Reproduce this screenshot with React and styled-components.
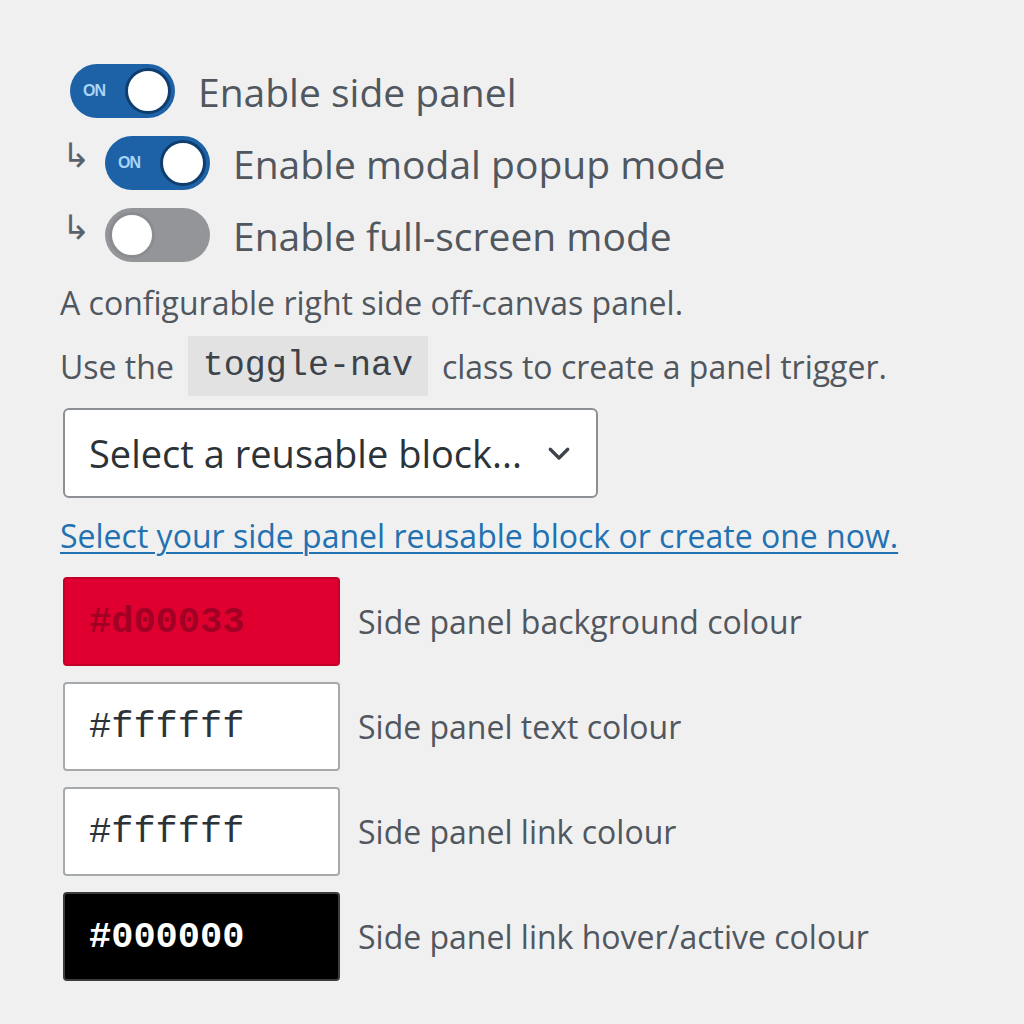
import React from 'react';
import styled, { createGlobalStyle } from 'styled-components';

const GlobalStyle = createGlobalStyle`
  html, body {
    margin: 0;
    padding: 0;
    background: #f0f0f1;
  }
  body {
    font-family: "Open Sans", "Noto Sans", sans-serif;
    color: #3c434a;
  }
`

const Panel = styled.div`
  width: 1024px;
  height: 1024px;
  box-sizing: border-box;
  padding: 55px 0 0 60px;
  display: flex;
  flex-direction: column;
`

const ToggleRow = styled.label`
  display: flex;
  align-items: center;
  height: 72px;
  margin-left: ${props => props.nested ? '2px' : '10px'};
`

const Arrow = styled.span`
  flex: none;
  width: 30px;
  overflow: visible;
  font-family: "DejaVu Sans", sans-serif;
  font-size: 34px;
  line-height: 1;
  color: #5c6168;
  margin-right: 13px;
  margin-top: -16px;
`

const Track = styled.span`
  position: relative;
  flex: none;
  width: 105px;
  height: 54px;
  box-sizing: border-box;
  border-radius: 27px;
  background: ${props => props.on ? '#1d62a6' : '#939598'};
  margin-right: 23px;
`

const OnText = styled.span`
  position: absolute;
  left: 13px;
  top: 17px;
  font-family: "Liberation Sans", sans-serif;
  font-size: 16px;
  font-weight: 700;
  line-height: 20px;
  color: #a9d4f5;
  letter-spacing: -1px;
`

const Knob = styled.span`
  position: absolute;
  top: 4px;
  ${props => props.on ? 'right: 4px;' : 'left: 4px;'}
  width: 46px;
  height: 46px;
  box-sizing: border-box;
  border-radius: 50%;
  background: #fff;
  border: 3px solid ${props => props.on ? '#0e3d6e' : '#8a8c90'};
`

const ToggleLabel = styled.span`
  font-size: 39px;
  line-height: 1;
  color: #50575e;
`

const Description = styled.p`
  margin: 0;
  height: ${props => props.first ? '62px' : '66px'};
  display: flex;
  align-items: center;
  font-size: 32px;
  color: #50575e;
  white-space: nowrap;
`

const Code = styled.code`
  font-family: "Liberation Mono", "DejaVu Sans Mono", monospace;
  font-size: 35px;
  background: #e2e2e3;
  padding: 10px 15px;
  margin: 0 14px;
  color: #3c434a;
`

const Select = styled.div`
  margin: 9px 0 0 3px;
  width: 535px;
  height: 90px;
  box-sizing: border-box;
  display: flex;
  align-items: center;
  justify-content: space-between;
  padding: 0 22px 0 24px;
  background: #fff;
  border: 2px solid #8c8f94;
  border-radius: 6px;
  font-size: 38px;
  color: #2c3338;
`

const HelpLink = styled.a`
  display: inline-block;
  margin-top: 16px;
  font-size: 32px;
  color: #2271b1;
  text-decoration: underline;
  text-decoration-thickness: 2px;
  text-underline-offset: 4px;
  white-space: nowrap;
`

const ColourList = styled.div`
  margin-top: 20px;
  display: flex;
  flex-direction: column;
  gap: 16px;
`

const ColourRow = styled.div`
  display: flex;
  align-items: center;
  gap: 18px;
`

const ColourInput = styled.div`
  margin-left: 3px;
  width: 277px;
  height: 89px;
  box-sizing: border-box;
  display: flex;
  align-items: center;
  padding-left: 24px;
  background: ${props => props.bg};
  color: ${props => props.fg};
  border: 2px solid ${props => props.border};
  border-radius: 4px;
  font-family: "Liberation Mono", "DejaVu Sans Mono", monospace;
  font-size: 37px;
  font-weight: ${props => props.bold ? 700 : 400};
`

const ColourLabel = styled.span`
  font-size: 32px;
  color: #50575e;
`

function Toggle({ on }) {
  return (
    <Track on={on}>
      {on && <OnText>ON</OnText>}
      <Knob on={on} />
    </Track>
  );
}

function Chevron() {
  return (
    <svg width="30" height="30" viewBox="0 0 24 24" fill="none" stroke="#3c434a" strokeWidth="2.6" strokeLinecap="round" strokeLinejoin="round">
      <path d="M5 9l7 7 7-7" />
    </svg>
  );
}

const colours = [
  { value: '#d00033', bg: '#e0002f', fg: '#a10024', border: '#c4002a', label: 'Side panel background colour', bold: true },
  { value: '#ffffff', bg: '#ffffff', fg: '#2c3338', border: '#a7aaad', label: 'Side panel text colour' },
  { value: '#ffffff', bg: '#ffffff', fg: '#2c3338', border: '#a7aaad', label: 'Side panel link colour' },
  { value: '#000000', bg: '#000000', fg: '#ffffff', border: '#3c3c3c', label: 'Side panel link hover/active colour', bold: true },
];

export default function App() {
  return (
    <>
      <GlobalStyle />
      <Panel>
        <ToggleRow>
          <Toggle on />
          <ToggleLabel>Enable side panel</ToggleLabel>
        </ToggleRow>
        <ToggleRow nested>
          <Arrow>↳</Arrow>
          <Toggle on />
          <ToggleLabel>Enable modal popup mode</ToggleLabel>
        </ToggleRow>
        <ToggleRow nested>
          <Arrow>↳</Arrow>
          <Toggle />
          <ToggleLabel>Enable full-screen mode</ToggleLabel>
        </ToggleRow>

        <Description first>A configurable right side off-canvas panel.</Description>
        <Description>
          Use the <Code>toggle-nav</Code> class to create a panel trigger.
        </Description>

        <Select>
          <span>Select a reusable block...</span>
          <Chevron />
        </Select>

        <div>
          <HelpLink href="#">Select your side panel reusable block or create one now.</HelpLink>
        </div>

        <ColourList>
          {colours.map((c, i) => (
            <ColourRow key={i}>
              <ColourInput bg={c.bg} fg={c.fg} border={c.border} bold={c.bold}>{c.value}</ColourInput>
              <ColourLabel>{c.label}</ColourLabel>
            </ColourRow>
          ))}
        </ColourList>
      </Panel>
    </>
  );
}
